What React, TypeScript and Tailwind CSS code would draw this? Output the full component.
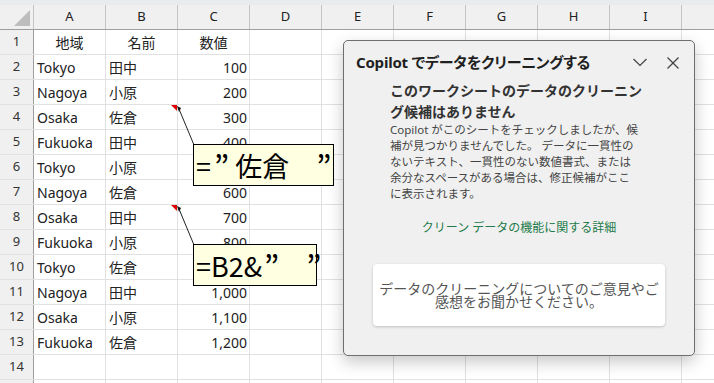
import React from 'react';

const cols = ['A', 'B', 'C', 'D', 'E', 'F', 'G', 'H', 'I', 'J'];

const rows: [string, string, string][] = [
  ['地域', '名前', '数値'],
  ['Tokyo', '田中', '100'],
  ['Nagoya', '小原', '200'],
  ['Osaka', '佐倉', '300'],
  ['Fukuoka', '田中', '400'],
  ['Tokyo', '小原', '500'],
  ['Nagoya', '佐倉', '600'],
  ['Osaka', '田中', '700'],
  ['Fukuoka', '小原', '800'],
  ['Tokyo', '佐倉', '900'],
  ['Nagoya', '田中', '1,000'],
  ['Osaka', '小原', '1,100'],
  ['Fukuoka', '佐倉', '1,200'],
  ['', '', ''],
  ['', '', ''],
];

const font = "[font-family:'Noto_Sans','Noto_Sans_CJK_JP',sans-serif]";

export default function App() {
  return (
    <div className={`relative w-[714px] h-[383px] overflow-hidden bg-white text-[#222] ${font}`}>
      <div className="h-[5px] bg-[#e9ecef]" />

      {/* Column headers */}
      <div className="flex h-[25px] bg-[#f0f0f0] border-b border-[#9e9e9e]">
        <div className="w-[34px] shrink-0 border-r border-[#c4c4c4] relative">
          <svg className="absolute right-[3px] bottom-[3px]" width="16" height="16" viewBox="0 0 16 16">
            <polygon points="16,0 16,16 0,16" fill="#bdbdbd" />
          </svg>
        </div>
        {cols.map((c) => (
          <div
            key={c}
            className="w-[72px] shrink-0 border-r border-[#c4c4c4] flex items-center justify-center text-[13px] text-[#222]"
          >
            {c}
          </div>
        ))}
      </div>

      {/* Rows */}
      {rows.map((r, i) => (
        <div key={i} className="flex h-[25px] border-b border-[#e1e1e1]">
          <div className="w-[34px] shrink-0 bg-[#f0f0f0] border-r border-[#9e9e9e] flex items-center justify-center text-[13px] text-[#333]">
            {i + 1}
          </div>
          <div className={`w-[72px] shrink-0 border-r border-[#e1e1e1] flex items-center text-[14px] ${i === 0 ? 'justify-center' : 'pl-[3px]'}`}>
            {r[0]}
          </div>
          <div className={`w-[72px] shrink-0 border-r border-[#e1e1e1] flex items-center text-[14px] ${i === 0 ? 'justify-center' : 'pl-[3px]'}`}>
            {r[1]}
          </div>
          <div className={`w-[72px] shrink-0 border-r border-[#e1e1e1] flex items-center text-[14px] ${i === 0 ? 'justify-center' : 'justify-end pr-[2px]'}`}>
            {r[2]}
          </div>
          {cols.slice(3).map((c) => (
            <div key={c} className="w-[72px] shrink-0 border-r border-[#e1e1e1]" />
          ))}
        </div>
      ))}

      {/* Comment indicators & leader lines */}
      <svg className="absolute inset-0 pointer-events-none" width="714" height="383">
        <polygon points="171,105 177,105 177,111" fill="#e00000" />
        <line x1="179" y1="109" x2="194" y2="145" stroke="#222" strokeWidth="1" />
        <polygon points="177,106 181,108 179,112" fill="#111" />
        <polygon points="171,205 177,205 177,211" fill="#e00000" />
        <line x1="179" y1="209" x2="194" y2="245" stroke="#222" strokeWidth="1" />
        <polygon points="177,206 181,208 179,212" fill="#111" />
      </svg>

      {/* Comments */}
      <div className="absolute left-[193px] top-[144px] w-[141px] h-[42px] bg-[#ffffe1] border border-black flex items-center pl-[2px] text-[27px] leading-none text-black whitespace-nowrap [font-family:'Noto_Sans_CJK_JP',sans-serif]">
        =<span className="text-[32px] pl-[3px] pr-[6px]">”</span>佐倉　<span className="text-[32px]">”</span>
      </div>
      <div className="absolute left-[193px] top-[244px] w-[124px] h-[42px] bg-[#ffffe1] border border-black flex items-center pl-[2px] text-[27px] leading-none text-black whitespace-nowrap [font-family:'Noto_Sans_CJK_JP',sans-serif]">
        =B2&amp;<span className="text-[32px] pl-[2px]">”</span>　<span className="text-[32px]">”</span>
      </div>

      {/* Copilot pane */}
      <div className="absolute left-[343px] top-[40px] w-[352px] h-[316px] bg-[#f0f0f0] border border-[#6e6e6e] rounded-[5px] shadow-[0_6px_16px_rgba(0,0,0,0.22)] flex flex-col">
        <div className="flex items-center justify-between pl-[12px] pr-[15px] pt-[11px] h-[32px]">
          <div className="text-[15px] font-bold text-[#1f1f1f] [font-feature-settings:'palt'] tracking-[-0.2px]">
            Copilot でデータをクリーニングする
          </div>
          <div className="flex items-center gap-[20px]">
            <svg width="14" height="9" viewBox="0 0 14 9" fill="none" stroke="#444" strokeWidth="1.2">
              <polyline points="0.5,1 7,7.5 13.5,1" />
            </svg>
            <svg width="12" height="12" viewBox="0 0 12 12" fill="none" stroke="#444" strokeWidth="1.2">
              <line x1="0.5" y1="0.5" x2="11.5" y2="11.5" />
              <line x1="11.5" y1="0.5" x2="0.5" y2="11.5" />
            </svg>
          </div>
        </div>

        <div className="w-[258px] mx-auto mt-[7px]">
          <div className="text-[14px] font-bold leading-[21px] text-[#333]">
            このワークシートのデータのクリーニン<br />グ候補はありません
          </div>
          <div className="text-[11.5px] leading-[16px] text-[#444]">
            Copilot がこのシートをチェックしましたが、候<br />
            補が見つかりませんでした。 データに一貫性の<br />
            ないテキスト、一貫性のない数値書式、または<br />
            余分なスペースがある場合は、修正候補がここ<br />
            に表示されます。
          </div>
        </div>

        <div className="mt-[18px] text-center text-[12px] leading-[16px] text-[#1e7b4a]">
          クリーン データの機能に関する詳細
        </div>

        <div className="mt-[28px] mx-auto w-[292px] h-[62px] bg-white rounded-[4px] shadow-[0_1px_3px_rgba(0,0,0,0.2)] flex items-center justify-center text-center text-[14px] leading-[13.5px] text-[#555]">
          データのクリーニングについてのご意見やご<br />感想をお聞かせください。
        </div>
      </div>
    </div>
  );
}
